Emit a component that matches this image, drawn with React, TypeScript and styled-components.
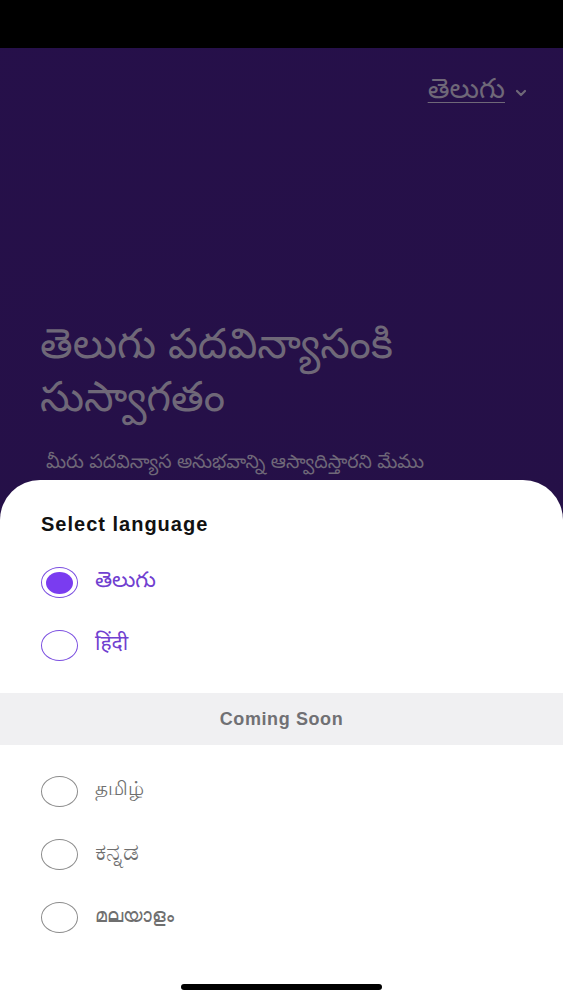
import React from "react";
import styled, { createGlobalStyle } from "styled-components";

const Global = createGlobalStyle`
  html, body { margin: 0; padding: 0; }
  body { font-family: "Noto Sans Telugu", "Noto Sans", "Liberation Sans", sans-serif; }
  * { box-sizing: border-box; }
`;

const Screen = styled.div`
  width: 563px;
  height: 1000px;
  display: flex;
  flex-direction: column;
  background: linear-gradient(160deg, #26104a 0%, #251047 60%, #2c1752 100%);
  overflow: hidden;
`;

const StatusBar = styled.div`
  height: 48px;
  flex: none;
  background: #000;
`;

const Hero = styled.div`
  height: 432px;
  flex: none;
  overflow: hidden;
  display: flex;
  flex-direction: column;
  padding: 27px 36px 0 40px;
`;

const LangPicker = styled.div`
  align-self: flex-end;
  display: flex;
  align-items: center;
  gap: 10px;
  color: #6f6878;
`;

const LangName = styled.span`
  font-size: 28px;
  line-height: 36px;
  text-decoration: underline;
  text-underline-offset: 4px;
  text-decoration-thickness: 1px;
`;

const Title = styled.h1`
  margin: 213px 0 0 0;
  font-size: 42px;
  font-weight: 400;
  line-height: 53px;
  color: #6f6878;
`;

const Subtitle = styled.p`
  margin: 19px 0 0 6px;
  font-size: 19px;
  line-height: 30px;
  white-space: nowrap;
  color: #6f6878;
`;

const Sheet = styled.div`
  flex: 1;
  background: #fff;
  border-radius: 40px 40px 0 0;
  display: flex;
  flex-direction: column;
  padding-top: 32px;
  position: relative;
`;

const SheetTitle = styled.h2`
  margin: 0 0 15px 41px;
  font-family: "Liberation Sans", Arial, sans-serif;
  font-size: 20px;
  font-weight: 700;
  letter-spacing: 1px;
  line-height: 24px;
  color: #111;
`;

const Option = styled.div`
  height: 63px;
  display: flex;
  align-items: center;
  gap: 17px;
  padding-left: 41px;
`;

const Radio = styled.span<{ $active?: boolean; $disabled?: boolean }>`
  width: 37px;
  height: 31px;
  border-radius: 50%;
  border: 1.5px solid ${(p) => (p.$disabled ? "#8c8c8c" : "#7b4fe0")};
  display: flex;
  align-items: center;
  justify-content: center;
  flex: none;
  &::after {
    content: "";
    display: ${(p) => (p.$active ? "block" : "none")};
    width: 27px;
    height: 22px;
    border-radius: 50%;
    background: #7a3cf0;
  }
`;

const OptionLabel = styled.span<{ $disabled?: boolean; $size?: number }>`
  font-size: ${(p) => p.$size ?? 20}px;
  line-height: 26px;
  color: ${(p) => (p.$disabled ? "#6f6f6f" : "#7040d0")};
`;

const Band = styled.div`
  margin-top: 16px;
  height: 52px;
  background: #f0f0f2;
  display: flex;
  align-items: center;
  justify-content: center;
  font-family: "Liberation Sans", Arial, sans-serif;
  font-weight: 700;
  font-size: 18px;
  letter-spacing: 0.6px;
  color: #707074;
  margin-bottom: 15px;
`;

const HomeBar = styled.div`
  position: absolute;
  left: 181px;
  bottom: 10px;
  width: 201px;
  height: 6px;
  border-radius: 3px;
  background: #000;
`;

const available = [
  { name: "తెలుగు", size: 22 },
  { name: "हिंदी", size: 21 },
];
const soon = [
  { name: "தமிழ்", size: 20 },
  { name: "ಕನ್ನಡ", size: 25 },
  { name: "മലയാളം", size: 19 },
];

export default function App() {
  return (
    <>
      <Global />
      <Screen>
        <StatusBar />
        <Hero>
          <LangPicker>
            <LangName>తెలుగు</LangName>
            <svg width="12" height="10" viewBox="0 0 12 10">
              <path d="M2 3 L6 7 L10 3" stroke="#6f6878" strokeWidth="2.2" fill="none" strokeLinecap="round" strokeLinejoin="round" />
            </svg>
          </LangPicker>
          <Title>
            తెలుగు పదవిన్యాసంకి
            <br />
            సుస్వాగతం
          </Title>
          <Subtitle>మీరు పదవిన్యాస అనుభవాన్ని ఆస్వాదిస్తారని మేము</Subtitle>
        </Hero>
        <Sheet>
          <SheetTitle>Select language</SheetTitle>
          {available.map((l, i) => (
            <Option key={l.name}>
              <Radio $active={i === 0} />
              <OptionLabel $size={l.size}>{l.name}</OptionLabel>
            </Option>
          ))}
          <Band>Coming Soon</Band>
          {soon.map((l) => (
            <Option key={l.name}>
              <Radio $disabled />
              <OptionLabel $disabled $size={l.size}>{l.name}</OptionLabel>
            </Option>
          ))}
          <HomeBar />
        </Sheet>
      </Screen>
    </>
  );
}
